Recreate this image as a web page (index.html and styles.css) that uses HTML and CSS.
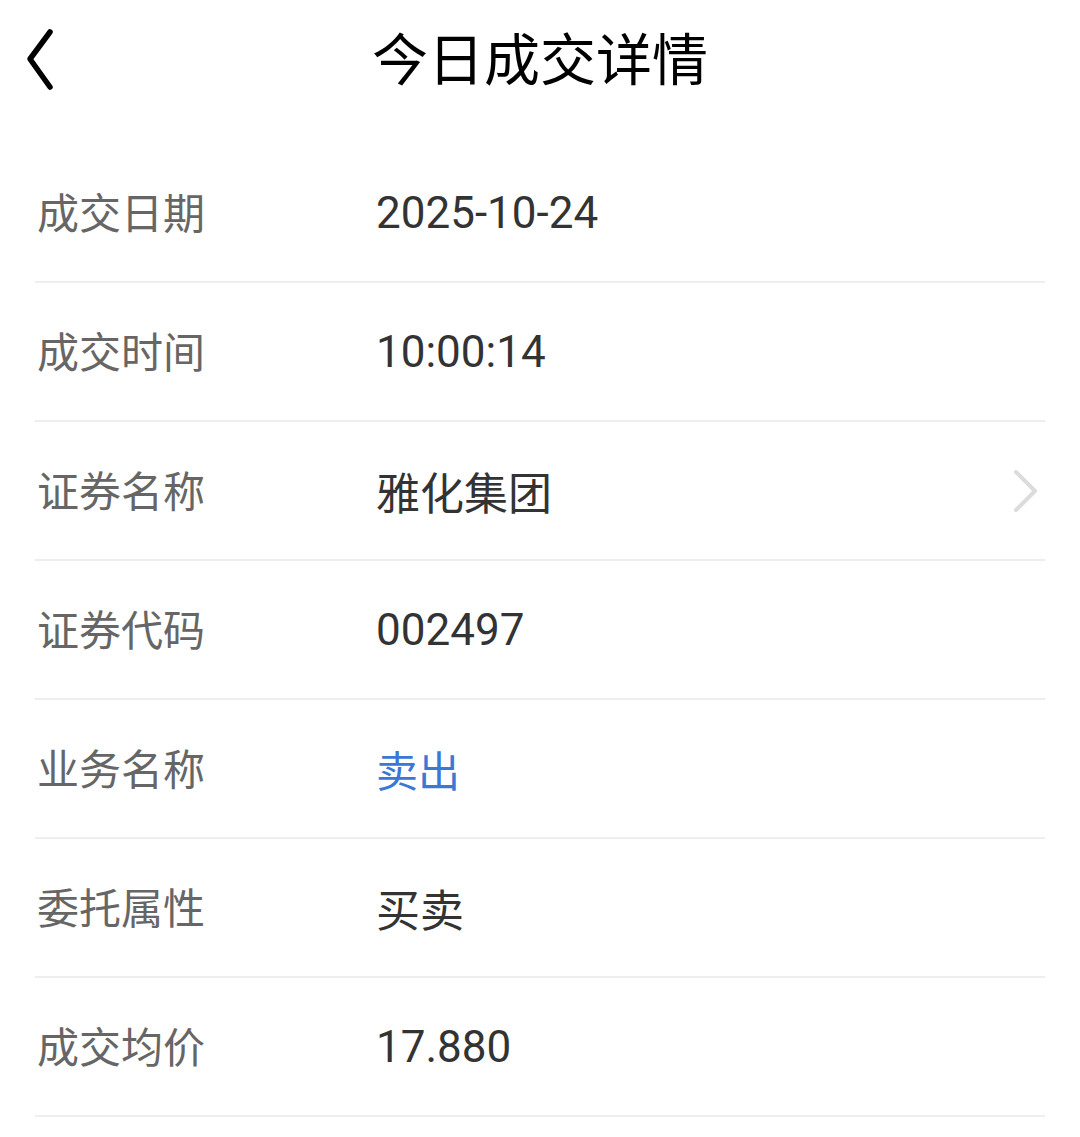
FILE: index.html
```html
<!DOCTYPE html>
<html lang="zh-CN">
<head>
    <meta charset="UTF-8">
    <title>今日成交详情</title>
    <link rel="stylesheet" href="styles.css">
</head>
<body>
<div class="header">
    <svg class="back" width="34" height="66" viewBox="0 0 34 66">
        <path d="M28 5 L8 32 L28 60" fill="none" stroke="#000" stroke-width="5.5" stroke-linecap="round" stroke-linejoin="round"/>
    </svg>
    <h1 class="title">今日成交详情</h1>
</div>
<ul class="list">
    <li class="row"><span class="label">成交日期</span><span class="value">2025-10-24</span></li>
    <li class="row"><span class="label">成交时间</span><span class="value">10:00:14</span></li>
    <li class="row">
        <span class="label">证券名称</span><span class="value">雅化集团</span>
        <svg class="more" width="26" height="44" viewBox="0 0 26 44">
            <path d="M3 3 L22 22 L3 41" fill="none" stroke="#dcdcdc" stroke-width="4" stroke-linecap="round" stroke-linejoin="round"/>
        </svg>
    </li>
    <li class="row"><span class="label">证券代码</span><span class="value">002497</span></li>
    <li class="row"><span class="label">业务名称</span><span class="value blue">卖出</span></li>
    <li class="row"><span class="label">委托属性</span><span class="value">买卖</span></li>
    <li class="row"><span class="label">成交均价</span><span class="value">17.880</span></li>
</ul>
</body>
</html>
```

FILE: styles.css
```css
*{
    margin: 0;
    padding: 0;
    list-style: none;
}
body{
    background: #fff;
    font-family: "Noto Sans CJK SC", "Noto Sans", sans-serif;
}
.header{
    height: 120px;
    display: flex;
    align-items: center;
    justify-content: center;
    position: relative;
}
.back{
    position: absolute;
    left: 22px;
    top: 27px;
}
.title{
    font-size: 56px;
    font-weight: 400;
    color: #000;
    margin-top: -10px;
}
.list{
    margin: 24px 35px 0;
}
.row{
    height: 137px;
    border-bottom: 2px solid #eeeeee;
    display: flex;
    align-items: center;
}
.label{
    width: 341px;
    padding-left: 2px;
    padding-bottom: 4px;
    box-sizing: border-box;
    font-size: 42px;
    color: #666;
}
.value{
    flex: 1;
    font-family: Roboto, "Noto Sans CJK SC", sans-serif;
    font-size: 44px;
    color: #333;
}
.blue{
    color: #3b78d6;
    font-size: 42px;
}
.more{
    margin-right: 6px;
}
```
